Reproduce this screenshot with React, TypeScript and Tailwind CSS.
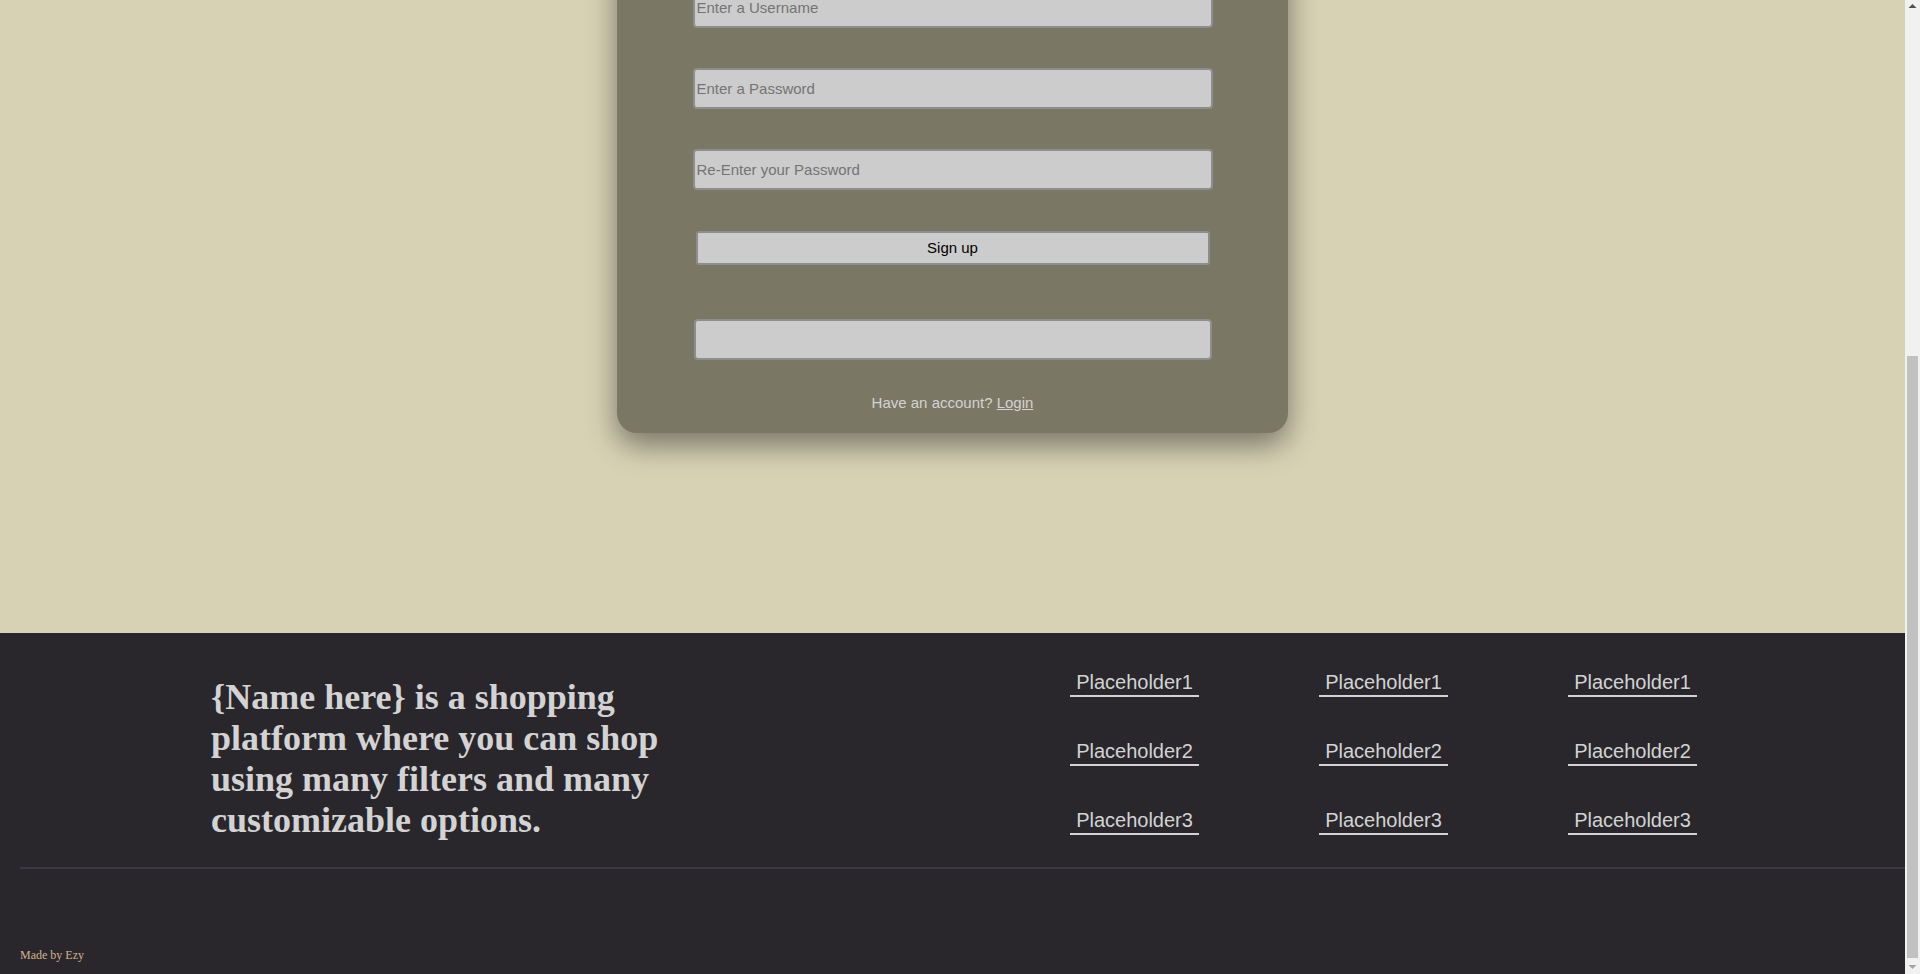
import React, { useLayoutEffect } from 'react';

const sans = "font-['Liberation_Sans',Arial,sans-serif]";
const serif = "font-['Liberation_Serif','Times_New_Roman',serif]";

const inputClass =
  'block h-[41px] bg-[#cccccc] border-2 border-[#8e8e8e] rounded-[4px] px-[2px] text-[15px] text-black placeholder:text-[#747474] outline-none';

// classic window scrollbar, as in the captured page
function FakeScrollbar() {
  return (
    <div className="fixed top-0 right-0 h-screen w-[15px] bg-[#f1f1f1] flex flex-col items-center">
      <svg width="15" height="15" viewBox="0 0 15 15" className="shrink-0">
        <polygon points="3.5,8 7.5,4 11.5,8" fill="#505050" />
      </svg>
      <div className="flex-1 w-full flex flex-col px-[2px] pt-[341px] pb-[1px]">
        <div className="flex-1 bg-[#c1c1c1]" />
      </div>
      <svg width="15" height="15" viewBox="0 0 15 15" className="shrink-0">
        <polygon points="3.5,6 7.5,10 11.5,6" fill="#a3a3a3" />
      </svg>
    </div>
  );
}

export default function App() {
  // the page is viewed scrolled down to the footer
  useLayoutEffect(() => {
    window.scrollTo(0, document.documentElement.scrollHeight);
  }, []);

  const columns = [1, 2, 3];
  const rows = [1, 2, 3];

  return (
    <div className={`min-h-screen flex flex-col pr-[15px] ${sans}`}>
      {/* Sign up area */}
      <main className="bg-[#d8d2b5] flex flex-col items-center pt-[425px] pb-[200px]">
        <div className="w-[671px] bg-[#7a7764] rounded-[20px] shadow-[0_12px_30px_rgba(0,0,0,0.45)] flex flex-col items-center pt-[40px] pb-[22px]">
          <h1 className="text-[30px] leading-[36px] font-bold text-[#d3d3d3] mb-[40px]">Sign up</h1>

          <input type="text" placeholder="Enter a Username" className={`${inputClass} w-[520px]`} />
          <input type="password" placeholder="Enter a Password" className={`${inputClass} w-[520px] mt-[40px]`} />
          <input type="password" placeholder="Re-Enter your Password" className={`${inputClass} w-[520px] mt-[40px]`} />

          <button className="mt-[41px] w-[514px] h-[34px] bg-[#cccccc] border-2 border-[#8e8e8e] rounded-[3px] text-[15px] text-black">
            Sign up
          </button>

          <input type="text" className={`${inputClass} w-[518px] h-[37px] mt-[54px]`} />

          <p className="mt-[34px] text-[15px] leading-[17px] text-[#d3d3d3]">
            Have an account? <a href="#" className="underline">Login</a>
          </p>
        </div>
      </main>

      {/* Footer */}
      <footer className="bg-[#29272c] pt-[40px] pb-[11px]">
        <div className="flex justify-between items-start pl-[211px] pr-[208px] h-[168px]">
          <p className={`${serif} mt-[4px] w-[460px] text-[36px] leading-[41px] font-bold text-[#d3d3d3]`}>
            {'{Name here}'} is a shopping platform where you can shop using many filters and many customizable options.
          </p>

          <div className="grid grid-cols-3 gap-x-[120px] gap-y-[45px]">
            {rows.map((r) =>
              columns.map((c) => (
                <a
                  key={`${r}-${c}`}
                  href="#"
                  className="inline-block w-[129px] text-center px-[6px] pb-[3px] text-[20px] leading-[19px] text-[#d3d3d3] border-b-2 border-[#d3d3d3]"
                >
                  Placeholder{r}
                </a>
              ))
            )}
          </div>
        </div>

        <hr className="ml-[20px] mt-[26px] border-0 h-[2px] bg-[#3a3840]" />

        <p className={`${serif} ml-[20px] mt-[79px] text-[12px] leading-[15px] text-[#d2b48c]`}>Made by Ezy</p>
      </footer>

      <FakeScrollbar />
    </div>
  );
}
